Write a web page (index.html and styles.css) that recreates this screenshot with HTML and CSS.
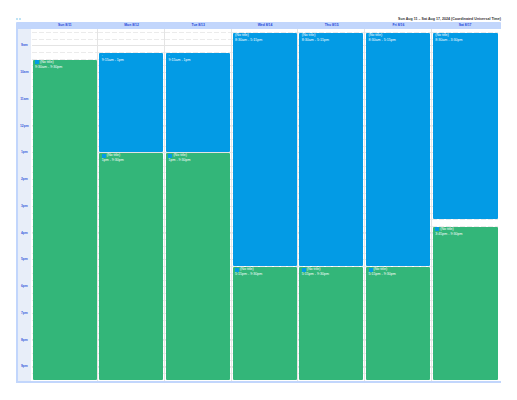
FILE: index.html
```html
<!DOCTYPE html>
<html lang="en">
<head>
    <meta charset="UTF-8">
    <meta name="viewport" content="width=device-width, initial-scale=1.0">
    <title>Week view</title>
    <link rel="stylesheet" href="styles.css">
</head>
<body>
    <div class="toolbar">
        <div class="nav"><span class="nav-back"></span><span class="nav-next"></span></div>
        <div class="range">Sun Aug 11 – Sat Aug 17, 2024 (Coordinated Universal Time)</div>
    </div>
    <div class="calendar">
        <div class="head">
            <div class="head-day">Sun 8/11</div>
            <div class="head-day">Mon 8/12</div>
            <div class="head-day">Tue 8/13</div>
            <div class="head-day">Wed 8/14</div>
            <div class="head-day">Thu 8/15</div>
            <div class="head-day">Fri 8/16</div>
            <div class="head-day">Sat 8/17</div>
        </div>
        <div class="body">
            <div class="axis">
                <div class="hour">9am</div>
                <div class="hour">10am</div>
                <div class="hour">11am</div>
                <div class="hour">12pm</div>
                <div class="hour">1pm</div>
                <div class="hour">2pm</div>
                <div class="hour">3pm</div>
                <div class="hour">4pm</div>
                <div class="hour">5pm</div>
                <div class="hour">6pm</div>
                <div class="hour">7pm</div>
                <div class="hour">8pm</div>
                <div class="hour">9pm</div>
            </div>
            <div class="day">
                <div class="event green from-0930 to-2130"><div class="title"><i class="dot"></i>(No title)</div><div>9:30am - 9:30pm</div></div>
            </div>
            <div class="day">
                <div class="event blue from-0915 to-1300"><div class="title">.</div><div>9:15am - 1pm</div></div>
                <div class="event green from-1300 to-2130"><div class="title"><i class="dot"></i>(No title)</div><div>1pm - 9:30pm</div></div>
            </div>
            <div class="day">
                <div class="event blue from-0915 to-1300"><div class="title">.</div><div>9:15am - 1pm</div></div>
                <div class="event green from-1300 to-2130"><div class="title"><i class="dot"></i>(No title)</div><div>1pm - 9:30pm</div></div>
            </div>
            <div class="day">
                <div class="event blue from-0830 to-1715"><div class="title">(No title)</div><div>8:30am - 5:15pm</div></div>
                <div class="event green from-1715 to-2130"><div class="title"><i class="dot"></i>(No title)</div><div>5:15pm - 9:30pm</div></div>
            </div>
            <div class="day">
                <div class="event blue from-0830 to-1715"><div class="title">(No title)</div><div>8:30am - 5:15pm</div></div>
                <div class="event green from-1715 to-2130"><div class="title"><i class="dot"></i>(No title)</div><div>5:15pm - 9:30pm</div></div>
            </div>
            <div class="day">
                <div class="event blue from-0830 to-1715"><div class="title">(No title)</div><div>8:30am - 5:15pm</div></div>
                <div class="event green from-1715 to-2130"><div class="title"><i class="dot"></i>(No title)</div><div>5:15pm - 9:30pm</div></div>
            </div>
            <div class="day">
                <div class="event blue from-0830 to-1530"><div class="title">(No title)</div><div>8:30am - 3:30pm</div></div>
                <div class="event green from-1545 to-2130"><div class="title"><i class="dot"></i>(No title)</div><div>3:45pm - 9:30pm</div></div>
            </div>
        </div>
    </div>
</body>
</html>
```
FILE: styles.css
```css
body {
    margin: 0;
    padding: 0 16px;
    font-family: "Liberation Sans", Arial, sans-serif;
    background-color: #FFFFFF;
    color: #333333;
}
.toolbar {
    height: 22px;
    display: flex;
    justify-content: space-between;
    align-items: flex-end;
    padding-bottom: 1px;
    box-sizing: border-box;
}
.nav {
    display: flex;
    gap: 1px;
    padding-bottom: 1px;
}
.nav-back, .nav-next {
    width: 2px;
    height: 2px;
    background-color: #BFE3F5;
}
.range {
    font-size: 3.6px;
    font-weight: bold;
    color: #333333;
}
.calendar {
    width: 485px;
    border-bottom: 2px solid #C2D6FC;
}
.head {
    height: 7px;
    padding: 0 2.6px 0 15.5px;
    display: grid;
    grid-template-columns: repeat(7, 1fr);
    background-color: #C2D6FC;
    border-radius: 1px 1px 0 0;
}
.head-day {
    font-size: 3.4px;
    font-weight: bold;
    line-height: 7px;
    text-align: center;
    color: #2546D8;
}
.body {
    padding-right: 2.6px;
    display: grid;
    grid-template-columns: 15.5px repeat(7, 1fr);
    grid-template-rows: 352px;
}
.axis {
    border-left: 2px solid #C2D6FC;
    margin-right: 0.8px;
    background-color: #E8EEF9;
    padding-top: 12.3px;
}
.hour {
    height: 26.76px;
    font-size: 3.3px;
    font-weight: bold;
    line-height: 8px;
    text-align: center;
    color: #3B5BDB;
}
.hour:last-child {
    height: auto;
}
/* one row per quarter hour, starting at 8:30 */
.day {
    display: grid;
    grid-template-rows: 4px repeat(52, 6.69px);
    padding: 0 0.7px 0 1px;
    border-right: 1px solid #E4E4E4;
    background-image:
        repeating-linear-gradient(to bottom, #E4E4E4 0 1px, transparent 1px 26.76px),
        repeating-linear-gradient(to right, transparent 0 5px, #FFFFFF 5px 7px),
        repeating-linear-gradient(to bottom, #EBEBEB 0 1px, transparent 1px 6.69px);
    background-position: 0 16px, 0 0, 0 3px;
    background-size: 100% 330px, 100% 100%, 100% 346px;
    background-repeat: no-repeat;
}
.day:last-child {
    border-right: none;
}
.event {
    grid-column: 1;
    margin-bottom: 1px;
    padding: 0 2.5px;
    font-size: 3.6px;
    line-height: 5px;
    color: #FFFFFF;
    border-radius: 1px;
    overflow: hidden;
}
.blue {
    background-color: #039BE5;
}
.green {
    background-color: #33B679;
}
.title {
    display: flex;
    align-items: center;
    gap: 1px;
}
.dot {
    width: 4px;
    height: 4px;
    background-color: #039BE5;
}
.from-0830 { grid-row-start: 2; }
.from-0915 { grid-row-start: 5; }
.from-0930 { grid-row-start: 6; }
.from-1300 { grid-row-start: 20; }
.from-1545 { grid-row-start: 31; }
.from-1715 { grid-row-start: 37; }
.to-1300 { grid-row-end: 20; }
.to-1530 { grid-row-end: 30; }
.to-1715 { grid-row-end: 37; }
.to-2130 { grid-row-end: 54; }
```
